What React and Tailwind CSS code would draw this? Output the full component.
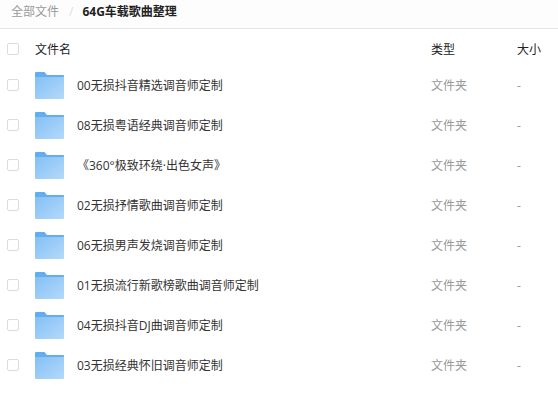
const files = [
  '00无损抖音精选调音师定制',
  '08无损粤语经典调音师定制',
  '《360°极致环绕·出色女声》',
  '02无损抒情歌曲调音师定制',
  '06无损男声发烧调音师定制',
  '01无损流行新歌榜歌曲调音师定制',
  '04无损抖音DJ曲调音师定制',
  '03无损经典怀旧调音师定制',
];

const FolderIcon = () => (
  <svg width="29" height="27" viewBox="0 0 29 27" className="shrink-0">
    <defs>
      <linearGradient id="folderBody" x1="0" y1="0" x2="1" y2="1">
        <stop offset="0" stopColor="#83c0f5" />
        <stop offset="1" stopColor="#b4d9fb" />
      </linearGradient>
    </defs>
    <path d="M0 1a1 1 0 0 1 1-1h8.5l2.5 3h16a1 1 0 0 1 1 1v6H0z" fill="#62aef0" />
    <path d="M0 5h29v21a1 1 0 0 1-1 1H1a1 1 0 0 1-1-1z" fill="url(#folderBody)" />
    <rect x="21" y="9" width="4" height="2" fill="#9ccbf5" />
  </svg>
);

const Checkbox = () => (
  <span className="w-[12px] h-[12px] border border-[#dcdcdc] rounded-[2px] bg-white shrink-0" />
);

const App = () => {
  return (
    <div
      className="w-[558px] h-[407px] bg-white overflow-hidden text-[12px] text-[#333]"
      style={{ fontFamily: '"Open Sans", "Noto Sans CJK SC", sans-serif' }}
    >
      {/* Breadcrumb */}
      <div className="h-[29px] flex items-center pl-[11px] pb-[4px] bg-[#fdfdfd] border-b border-[#e6e6e6]">
        <span className="text-[#999]">全部文件</span>
        <span className="text-[#ddd] ml-[10px] mr-[9px]">/</span>
        <span className="font-bold text-[#222]">64G车载歌曲整理</span>
      </div>

      {/* Table head */}
      <div className="h-[36px] pt-[4px] flex items-center pl-[7px]">
        <Checkbox />
        <span className="ml-[16px] w-[396px] pt-[2px] text-[#222]">文件名</span>
        <span className="w-[86px] pt-[2px] text-[#222]">类型</span>
        <span className="pt-[2px] text-[#222]">大小</span>
      </div>

      {/* File rows */}
      {files.map((name) => (
        <div key={name} className="h-[40px] flex items-center pl-[7px]">
          <Checkbox />
          <div className="ml-[15px] w-[397px] flex items-center">
            <span className="ml-[1px] mt-[1px] flex">
              <FolderIcon />
            </span>
            <span className="ml-[13px] pt-[2px] text-[#333]">{name}</span>
          </div>
          <span className="w-[86px] pt-[2px] text-[#999]">文件夹</span>
          <span className="pt-[2px] text-[#999]">-</span>
        </div>
      ))}
    </div>
  );
};

export default App;
